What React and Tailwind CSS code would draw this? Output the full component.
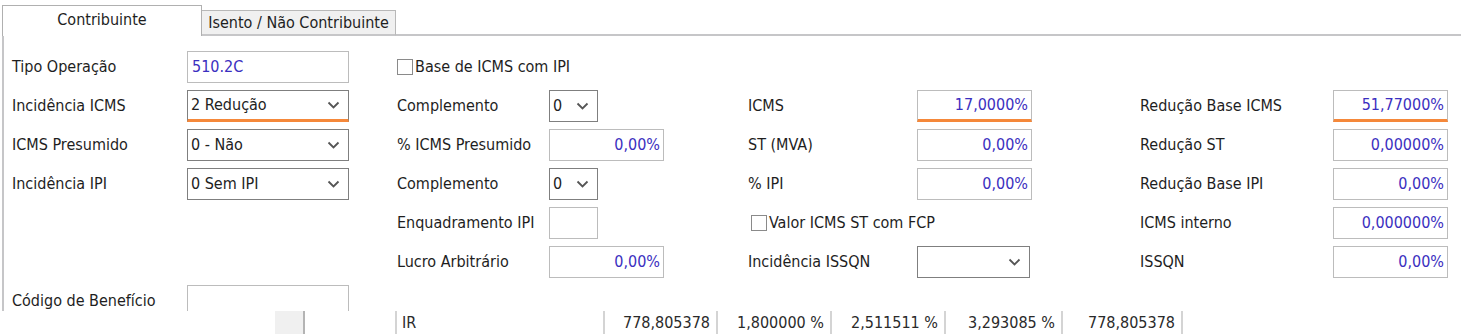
import React from 'react';

const Chevron = () => (
    <svg width="13" height="8" viewBox="0 0 13 8" className="shrink-0">
        <polyline points="1.5,1.5 6.5,6.5 11.5,1.5" fill="none" stroke="#555" strokeWidth="1.8" />
    </svg>
);

const TextBox = ({ value, w, orange, left }) => (
    <div
        className={`${w} h-[32px] bg-white border border-[#bcbcbc] flex items-center pr-[3px] text-[#3b2fc0] ${left ? 'justify-start pl-[4px]' : 'justify-end'} ${orange ? 'border-b-[3px] border-b-[#f5883a]' : ''}`}
    >
        {value}
    </div>
);

const Select = ({ value, w, orange }) => (
    <div
        className={`${w} h-[32px] bg-white border border-[#7f7f7f] flex items-center justify-between pl-[3px] pr-[8px] text-[#222] ${orange ? 'border-b-[3px] border-b-[#f5883a]' : ''}`}
    >
        <span>{value}</span>
        <Chevron />
    </div>
);

const Check = ({ label }) => (
    <div className="flex items-center gap-[2px]">
        <div className="w-[16px] h-[16px] border border-[#8a8a8a] bg-white"></div>
        <span>{label}</span>
    </div>
);

const Cell = ({ label, lw, children }) => (
    <div className="flex items-center h-[32px]">
        {label && <div className={`${lw} shrink-0`}>{label}</div>}
        {children}
    </div>
);

export default function App() {
    return (
        <div className="w-[1461px] h-[334px] bg-white overflow-hidden text-[16px] text-[#1e1e1e] font-['DejaVu_Sans_Condensed','DejaVu_Sans',sans-serif]">
            {/* tabs */}
            <div className="h-[36px] flex items-end pl-[2px]">
                <div className="w-[200px] h-[31px] border-t border-l border-r border-[#b0b0b0] bg-white flex items-center justify-center pb-[2px] relative z-10">
                    Contribuinte
                </div>
                <div className="w-[194px] h-[26px] bg-[#f0f0f0] border-t border-r border-b-2 border-[#b8b8b8] border-b-[#c6c6c8] flex items-center justify-center">
                    Isento / Não Contribuinte
                </div>
                <div className="flex-1 border-b-2 border-[#c6c6c8]"></div>
            </div>

            {/* panel */}
            <div className="h-[275px] ml-[2px] border-l-2 border-[#c6c6c8] pl-[8px] pt-[15px] overflow-hidden">
                <div className="grid grid-cols-[385px_351px_392px_1fr] gap-y-[7px]">
                    {/* row 1 */}
                    <Cell label="Tipo Operação" lw="w-[175px]">
                        <TextBox value="510.2C" w="w-[162px]" left />
                    </Cell>
                    <Cell>
                        <Check label="Base de ICMS com IPI" />
                    </Cell>
                    <Cell />
                    <Cell />

                    {/* row 2 */}
                    <Cell label="Incidência ICMS" lw="w-[175px]">
                        <Select value="2 Redução" w="w-[162px]" orange />
                    </Cell>
                    <Cell label="Complemento" lw="w-[152px]">
                        <Select value="0" w="w-[49px]" />
                    </Cell>
                    <Cell label="ICMS" lw="w-[169px]">
                        <TextBox value="17,0000%" w="w-[115px]" orange />
                    </Cell>
                    <Cell label="Redução Base ICMS" lw="w-[193px]">
                        <TextBox value="51,77000%" w="w-[115px]" orange />
                    </Cell>

                    {/* row 3 */}
                    <Cell label="ICMS Presumido" lw="w-[175px]">
                        <Select value="0 - Não" w="w-[162px]" />
                    </Cell>
                    <Cell label="% ICMS Presumido" lw="w-[152px]">
                        <TextBox value="0,00%" w="w-[115px]" />
                    </Cell>
                    <Cell label="ST (MVA)" lw="w-[169px]">
                        <TextBox value="0,00%" w="w-[115px]" />
                    </Cell>
                    <Cell label="Redução ST" lw="w-[193px]">
                        <TextBox value="0,00000%" w="w-[115px]" />
                    </Cell>

                    {/* row 4 */}
                    <Cell label="Incidência IPI" lw="w-[175px]">
                        <Select value="0 Sem IPI" w="w-[162px]" />
                    </Cell>
                    <Cell label="Complemento" lw="w-[152px]">
                        <Select value="0" w="w-[49px]" />
                    </Cell>
                    <Cell label="% IPI" lw="w-[169px]">
                        <TextBox value="0,00%" w="w-[115px]" />
                    </Cell>
                    <Cell label="Redução Base IPI" lw="w-[193px]">
                        <TextBox value="0,00%" w="w-[115px]" />
                    </Cell>

                    {/* row 5 */}
                    <Cell />
                    <Cell label="Enquadramento IPI" lw="w-[152px]">
                        <TextBox value="" w="w-[49px]" />
                    </Cell>
                    <Cell>
                        <div className="pl-[3px]">
                            <Check label="Valor ICMS ST com FCP" />
                        </div>
                    </Cell>
                    <Cell label="ICMS interno" lw="w-[193px]">
                        <TextBox value="0,000000%" w="w-[115px]" />
                    </Cell>

                    {/* row 6 */}
                    <Cell />
                    <Cell label="Lucro Arbitrário" lw="w-[152px]">
                        <TextBox value="0,00%" w="w-[115px]" />
                    </Cell>
                    <Cell label="Incidência ISSQN" lw="w-[169px]">
                        <Select value="" w="w-[113px]" />
                    </Cell>
                    <Cell label="ISSQN" lw="w-[193px]">
                        <TextBox value="0,00%" w="w-[115px]" />
                    </Cell>

                    {/* row 7 */}
                    <Cell label="Código de Benefício" lw="w-[175px]">
                        <TextBox value="" w="w-[162px]" />
                    </Cell>
                </div>
            </div>

            {/* grid row below */}
            <div className="h-[23px] flex text-[#2a2a2a]">
                <div className="w-[275px]"></div>
                <div className="w-[30px] bg-[#f0f0f0] border-r-2 border-[#b4b4b4]"></div>
                <div className="w-[92px] border-r-2 border-[#d4d4d4]"></div>
                <div className="w-[208px] border-r-2 border-[#d4d4d4] pl-[5px] flex items-center">IR</div>
                <div className="w-[113px] border-r-2 border-[#d4d4d4] pr-[6px] flex items-center justify-end">778,805378</div>
                <div className="w-[114px] border-r-2 border-[#d4d4d4] pr-[6px] flex items-center justify-end">1,800000 %</div>
                <div className="w-[114px] border-r-2 border-[#d4d4d4] pr-[6px] flex items-center justify-end">2,511511 %</div>
                <div className="w-[117px] border-r-2 border-[#d4d4d4] pr-[6px] flex items-center justify-end">3,293085 %</div>
                <div className="w-[120px] border-r-2 border-[#d4d4d4] pr-[6px] flex items-center justify-end">778,805378</div>
            </div>
        </div>
    );
}
